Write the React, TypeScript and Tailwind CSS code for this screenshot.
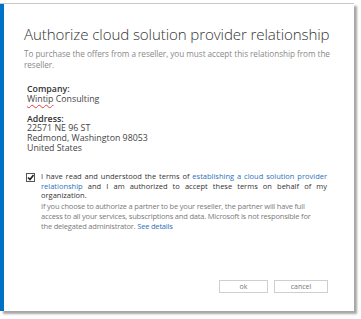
import React from 'react';

export default function App() {
  return (
    <div className="w-[361px] h-[319px] bg-white pt-[3px] overflow-hidden" style={{ fontFamily: '"Open Sans", "Liberation Sans", sans-serif' }}>
      <div className="w-[354px] h-[308px] bg-white border-t border-[#c8c8c8] shadow-[3px_3px_2px_rgba(0,0,0,0.35)] flex">
        {/* Blue edge */}
        <div className="w-[4px] bg-[#0072c6] shrink-0" />

        <div className="flex-1 min-w-0 flex flex-col pl-[20px] pr-[20px] pt-[19px]">
          <h1 className="text-[15.1px] font-light text-[#333] leading-[22px] tracking-[-0.1px] whitespace-nowrap">
            Authorize cloud solution provider relationship
          </h1>
          <p className="mt-[3px] text-[8.2px] leading-[11px] text-[#8a8a8a] tracking-[-0.05px]">
            To purchase the offers from a reseller, you must accept this relationship from the reseller.
          </p>

          <div className="pl-[3px] mt-[15px] text-[8.8px] leading-[9.8px] text-[#444]">
            <div className="font-semibold text-[#333]">Company:</div>
            <div>
              <span className="underline decoration-wavy decoration-[#e04040] decoration-[0.5px] underline-offset-[2px]">Wintip</span> Consulting
            </div>

            <div className="mt-[10px] font-semibold text-[#333]">Address:</div>
            <div>22571 NE 96 ST</div>
            <div>Redmond, Washington 98053</div>
            <div>United States</div>
          </div>

          <div className="mt-[18px] flex gap-[6px] pl-[2px] pr-[7px]">
            <div className="mt-[1px] w-[9px] h-[9px] border border-[#555] bg-white flex items-center justify-center shrink-0">
              <svg width="7" height="7" viewBox="0 0 7 7">
                <path d="M1 3.5 L3 5.5 L6.5 1" stroke="#222" strokeWidth="1.6" fill="none" />
              </svg>
            </div>
            <div className="flex-1 min-w-0 text-[7.5px] leading-[9.8px]">
              <p className="text-[#333] text-justify">
                I have read and understood the terms of{' '}
                <span className="text-[#2d71b8]">establishing a cloud solution provider relationship</span> and I am authorized to accept these terms on behalf of my organization.
              </p>
              <p className="mt-[1px] text-[#7a7a7a] tracking-[-0.19px]">
                If you choose to authorize a partner to be your reseller, the partner will have full
                <br />
                access to all your services, subscriptions and data. Microsoft is not responsible for
                <br />
                the delegated administrator.{' '}
                <span className="text-[#2d71b8]">See details</span>
              </p>
            </div>
          </div>

          <div className="mt-auto mb-[18px] flex justify-end gap-[6px] pr-[6px]">
            <button className="w-[49px] h-[13px] border border-[#cfcfcf] bg-white text-[7px] leading-none text-[#777]">ok</button>
            <button className="w-[54px] h-[13px] border border-[#cfcfcf] bg-white text-[7px] leading-none text-[#777]">cancel</button>
          </div>
        </div>
      </div>
    </div>
  );
}
